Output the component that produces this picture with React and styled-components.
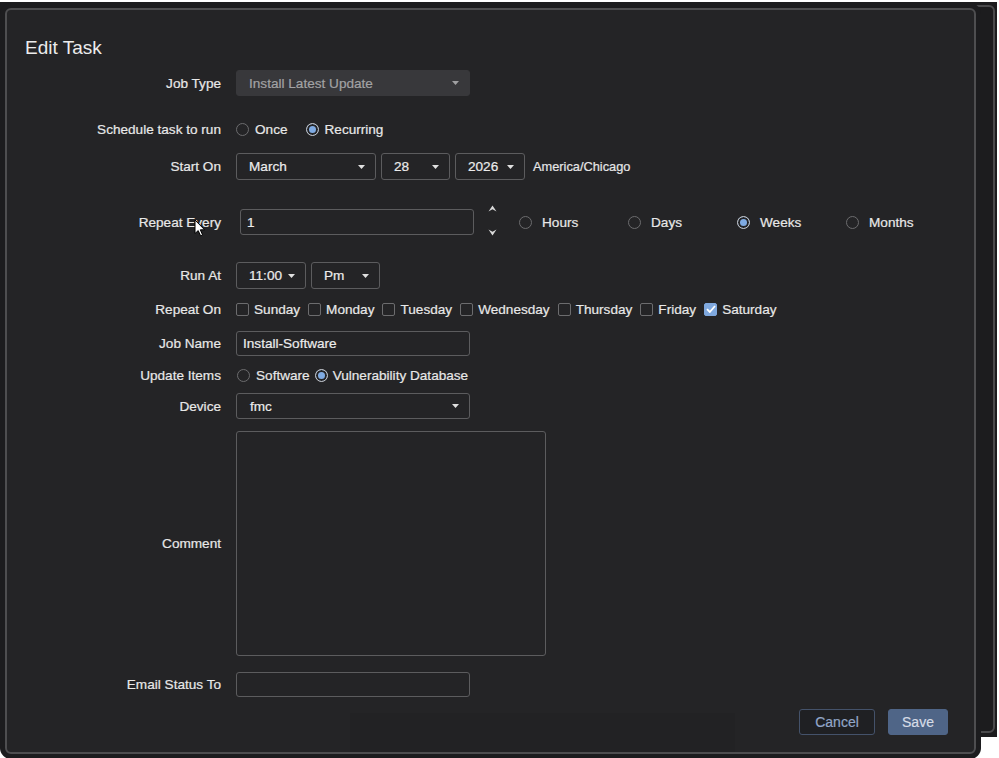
import React from "react";
import styled, { createGlobalStyle } from "styled-components";

const Global = createGlobalStyle`
  html, body { margin: 0; padding: 0; background: #ffffff; }
  body { font-family: "Liberation Sans", Arial, Helvetica, sans-serif; font-size: 13.6px; }
`;

const Stage = styled.div`
  position: relative;
  width: 999px;
  height: 758px;
  background: #ffffff;
  overflow: hidden;
`;

const BackPanel = styled.div`
  margin-top: 2px;
  width: 997px;
  height: 735px;
  box-sizing: border-box;
  background: #1c1c1e;
  padding: 3px 2px 4px 2px;
`;

const PanelFrame = styled.div`
  height: 100%;
  box-sizing: border-box;
  border: 2px solid #4a4a4c;
  border-radius: 6px;
`;

const Dialog = styled.div`
  position: absolute;
  left: 5px;
  top: 8px;
  width: 971px;
  height: 746px;
  box-sizing: border-box;
  background: #242426;
  border: 2px solid #4e4e50;
  border-radius: 6px;
  box-shadow: 0 0 0 5px #1c1c1e;
  display: flex;
  flex-direction: column;
  color: #e6e6e6;
  -webkit-text-stroke: 0.2px currentColor;
`;

const Title = styled.h1`
  margin: 27px 0 0 18px;
  font-size: 19px;
  line-height: 22px;
  font-weight: normal;
  color: #ececec;
  -webkit-text-stroke: 0;
`;

const Row = styled.div`
  display: grid;
  grid-template-columns: 214px 1fr;
  column-gap: 15px;
  align-items: center;
  margin-top: ${(p) => p.$mt}px;
  height: ${(p) => p.$h}px;
`;

const Label = styled.div`
  text-align: right;
  white-space: nowrap;
  color: #e8e8e8;
`;

const Controls = styled.div`
  display: flex;
  align-items: center;
  height: 100%;
`;

const SelectBox = styled.div`
  display: flex;
  align-items: center;
  justify-content: space-between;
  box-sizing: border-box;
  width: ${(p) => p.$w}px;
  height: ${(p) => p.$h || 26}px;
  margin-right: ${(p) => p.$mr || 0}px;
  padding: 0 10px 0 ${(p) => p.$pl || 12}px;
  border: 1px solid ${(p) => (p.$disabled ? "#38383b" : "#5c5c5e")};
  border-radius: 3px;
  background: ${(p) => (p.$disabled ? "#38383b" : "transparent")};
  color: ${(p) => (p.$disabled ? "#a2a2a4" : "#ececec")};
`;

const Caret = styled.svg`
  width: 7px;
  height: 4px;
  flex: none;
`;

const Select = ({ value, w, h, mr, disabled, pl, tight }) => (
  <SelectBox $w={w} $h={h} $mr={mr} $disabled={disabled} $pl={pl}>
    <span style={tight ? { marginRight: 5 } : undefined}>{value}</span>
    {tight && <span style={{ flex: 1 }} />}
    <Caret viewBox="0 0 7 4">
      <path d="M0 0 L7 0 L3.5 4 Z" fill={disabled ? "#a0a0a2" : "#e0e0e0"} />
    </Caret>
  </SelectBox>
);

const TextInput = styled.div`
  box-sizing: border-box;
  width: ${(p) => p.$w}px;
  height: ${(p) => p.$h}px;
  margin-left: ${(p) => p.$ml || 0}px;
  border: 1px solid #5c5c5e;
  border-radius: 3px;
  padding: 0 0 0 ${(p) => p.$pl || 6}px;
  display: flex;
  align-items: center;
  color: #ececec;
`;

const TextArea = styled.div`
  box-sizing: border-box;
  width: 310px;
  height: 225px;
  border: 1px solid #5c5c5e;
  border-radius: 3px;
  align-self: start;
`;

const Zone = styled.span`
  margin-left: 8px;
  font-size: 12.8px;
  color: #e6e6e6;
`;

const RadioGroup = styled.div`
  display: flex;
  align-items: center;
  gap: ${(p) => p.$gap}px;
  margin-left: ${(p) => p.$ml || 0}px;
`;

const Option = styled.label`
  display: flex;
  align-items: center;
  gap: ${(p) => p.$inner || 6}px;
  width: ${(p) => (p.$w ? `${p.$w}px` : "auto")};
  color: #e8e8e8;
  white-space: nowrap;
`;

const RadioDot = styled.span`
  box-sizing: border-box;
  width: 13px;
  height: 13px;
  border-radius: 50%;
  flex: none;
  border: 1px solid ${(p) => (p.$on ? "#c4c4c6" : "#6c6c6e")};
  background: ${(p) => (p.$on ? "#7fabe3" : "transparent")};
  box-shadow: ${(p) => (p.$on ? "inset 0 0 0 2px #242426" : "none")};
`;

const Radio = ({ label, on, w, inner }) => (
  <Option $w={w} $inner={inner}>
    <RadioDot $on={on} />
    {label}
  </Option>
);

const CheckGroup = styled.div`
  display: flex;
  align-items: center;
  gap: 8px;
`;

const CheckBoxBox = styled.span`
  box-sizing: border-box;
  width: 13px;
  height: 13px;
  flex: none;
  border-radius: 2px;
  border: 1px solid ${(p) => (p.$on ? "#7fa8de" : "#6c6c6e")};
  background: ${(p) => (p.$on ? "#7fa8de" : "transparent")};
  display: flex;
  align-items: center;
  justify-content: center;
`;

const Check = ({ label, on }) => (
  <Option $inner={5}>
    <CheckBoxBox $on={on}>
      {on && (
        <svg width="10" height="8" viewBox="0 0 10 8">
          <path d="M1 4.2 L3.8 7 L9 1" fill="none" stroke="#ffffff" strokeWidth="1.8" />
        </svg>
      )}
    </CheckBoxBox>
    {label}
  </Option>
);

const Spinner = styled.div`
  display: flex;
  flex-direction: column;
  justify-content: space-between;
  height: 31px;
  margin-left: 14px;
  margin-top: -3px;
`;

const Chevron = ({ up }) => (
  <svg width="9" height="7" viewBox="0 0 9 7">
    <path
      d={up ? "M0.5 6.5 L4.5 0.5 L8.5 6.5 L4.5 4.2 Z" : "M0.5 0.5 L4.5 6.5 L8.5 0.5 L4.5 2.8 Z"}
      fill="#dadada"
    />
  </svg>
);

const Footer = styled.div`
  display: flex;
  justify-content: flex-end;
  gap: 13px;
  margin-top: 12px;
  padding-right: 26px;
`;

const Button = styled.button`
  box-sizing: border-box;
  height: 26px;
  width: ${(p) => p.$w}px;
  border-radius: 3px;
  font-family: inherit;
  font-size: 14px;
  -webkit-text-stroke: 0.2px currentColor;
  border: 1px solid ${(p) => (p.$primary ? "#4f6587" : "#44526a")};
  background: ${(p) => (p.$primary ? "#4f6587" : "#1f2023")};
  color: ${(p) => (p.$primary ? "#d6dce6" : "#92a6c8")};
`;

const Ghost = styled.div`
  position: absolute;
  left: 343px;
  top: 703px;
  width: 385px;
  height: 39px;
  background: #222224;
`;

const Cursor = styled.svg`
  position: absolute;
  left: 194px;
  top: 219px;
`;

export default function App() {
  return (
    <Stage>
      <Global />
      <BackPanel>
        <PanelFrame />
      </BackPanel>
      <Dialog>
        <Ghost />
        <Title>Edit Task</Title>

        <Row $mt={11} $h={26}>
          <Label>Job Type</Label>
          <Controls>
            <Select value="Install Latest Update" w={234} disabled />
          </Controls>
        </Row>

        <Row $mt={20} $h={26}>
          <Label>Schedule task to run</Label>
          <Controls>
            <RadioGroup $gap={18}>
              <Radio label="Once" />
              <Radio label="Recurring" on />
            </RadioGroup>
          </Controls>
        </Row>

        <Row $mt={11} $h={27}>
          <Label>Start On</Label>
          <Controls>
            <Select value="March" w={140} h={27} mr={5} />
            <Select value="28" w={69} h={27} mr={5} />
            <Select value="2026" w={70} h={27} />
            <Zone>America/Chicago</Zone>
          </Controls>
        </Row>

        <Row $mt={28} $h={26}>
          <Label>Repeat Every</Label>
          <Controls>
            <TextInput $w={234} $h={26} $ml={4} $pl={6}>1</TextInput>
            <Spinner>
              <Chevron up />
              <Chevron />
            </Spinner>
            <RadioGroup $gap={0} $ml={22}>
              <Radio label="Hours" w={109} inner={10} />
              <Radio label="Days" w={109} inner={10} />
              <Radio label="Weeks" w={109} inner={10} on />
              <Radio label="Months" w={109} inner={10} />
            </RadioGroup>
          </Controls>
        </Row>

        <Row $mt={28} $h={27}>
          <Label>Run At</Label>
          <Controls>
            <Select value="11:00" w={70} h={27} mr={5} tight />
            <Select value="Pm" w={69} h={27} />
          </Controls>
        </Row>

        <Row $mt={10} $h={20}>
          <Label>Repeat On</Label>
          <Controls>
            <CheckGroup>
              <Check label="Sunday" />
              <Check label="Monday" />
              <Check label="Tuesday" />
              <Check label="Wednesday" />
              <Check label="Thursday" />
              <Check label="Friday" />
              <Check label="Saturday" on />
            </CheckGroup>
          </Controls>
        </Row>

        <Row $mt={12} $h={25}>
          <Label>Job Name</Label>
          <Controls>
            <TextInput $w={234} $h={25}>Install-Software</TextInput>
          </Controls>
        </Row>

        <Row $mt={9} $h={20}>
          <Label>Update Items</Label>
          <Controls>
            <RadioGroup $gap={5} $ml={1}>
              <Radio label="Software" />
              <Radio label="Vulnerability Database" inner={5} on />
            </RadioGroup>
          </Controls>
        </Row>

        <Row $mt={8} $h={26}>
          <Label>Device</Label>
          <Controls>
            <Select value="fmc" w={234} pl={13} />
          </Controls>
        </Row>

        <Row $mt={12} $h={225}>
          <Label>Comment</Label>
          <Controls>
            <TextArea />
          </Controls>
        </Row>

        <Row $mt={16} $h={25}>
          <Label>Email Status To</Label>
          <Controls>
            <TextInput $w={234} $h={25} />
          </Controls>
        </Row>

        <Footer>
          <Button $w={76}>Cancel</Button>
          <Button $w={60} $primary>Save</Button>
        </Footer>
      </Dialog>
      <Cursor width="12" height="18" viewBox="0 0 12 18">
        <path
          d="M1 1 L1 14.5 L4.2 11.6 L6.6 16.8 L8.6 15.9 L6.3 10.8 L10.6 10.8 Z"
          fill="#ffffff"
          stroke="#000000"
          strokeWidth="1"
          strokeLinejoin="round"
        />
      </Cursor>
    </Stage>
  );
}
